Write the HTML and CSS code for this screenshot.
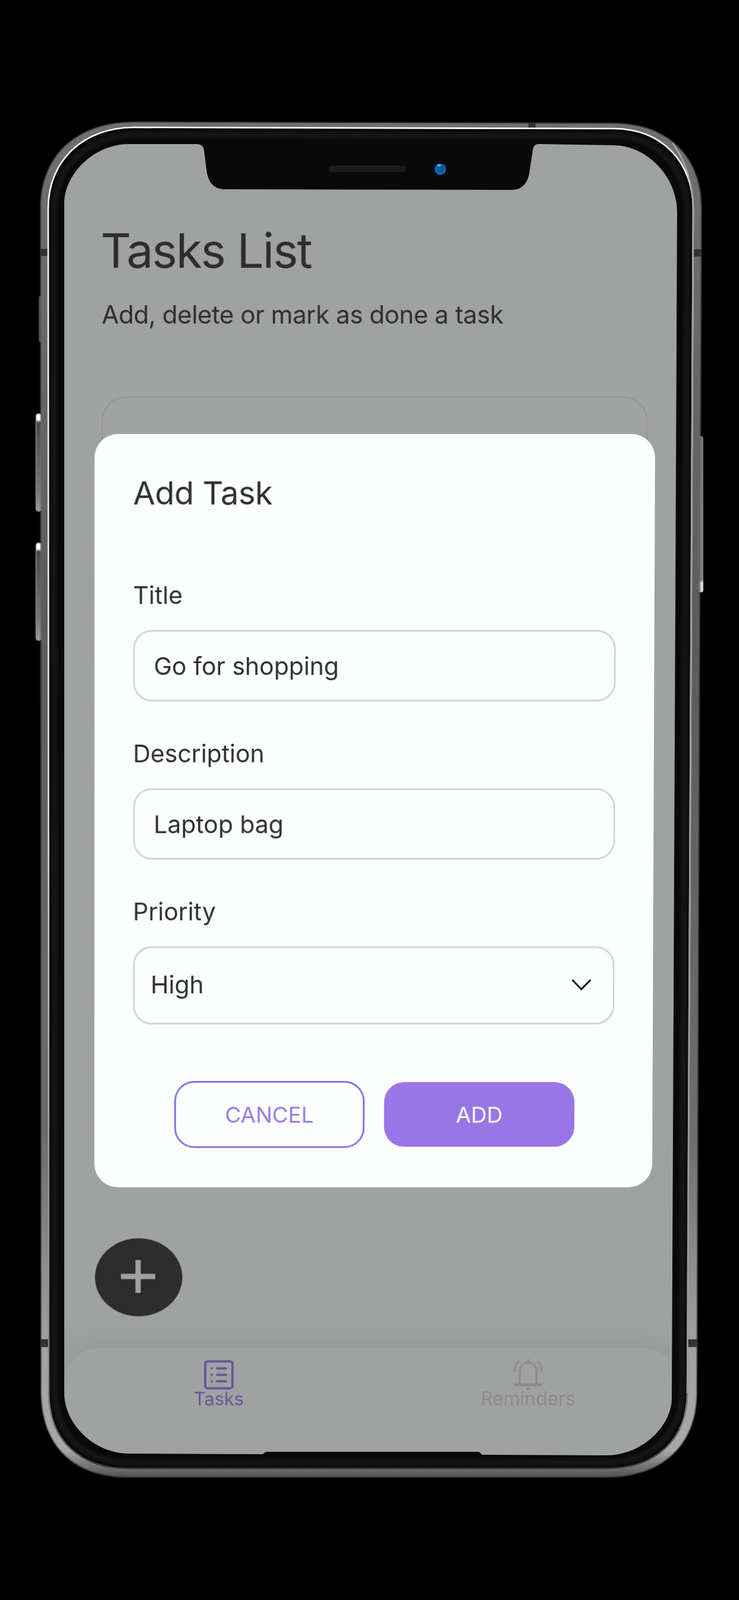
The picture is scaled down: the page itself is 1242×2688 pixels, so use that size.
FILE: index.html
```html
<!DOCTYPE html>
<html lang="en">
<head>
<meta charset="utf-8">
<title>Tasks List</title>
<link rel="stylesheet" href="styles.css">
</head>
<body>
<div class="stage">
  <svg class="device" viewBox="0 0 1242 2688" width="1242" height="2688" aria-hidden="true">
    <defs>
      <linearGradient id="frameFill" x1="0" y1="205" x2="0" y2="2482" gradientUnits="userSpaceOnUse">
        <stop offset="0" stop-color="#707070"/>
        <stop offset="0.4" stop-color="#5c5c5c"/>
        <stop offset="0.75" stop-color="#6e6e6e"/>
        <stop offset="0.9" stop-color="#a0a0a0"/>
        <stop offset="0.98" stop-color="#a8a8a8"/>
        <stop offset="1" stop-color="#505050"/>
      </linearGradient>
      <linearGradient id="lineStroke" x1="0" y1="205" x2="0" y2="2482" gradientUnits="userSpaceOnUse">
        <stop offset="0" stop-color="#ffffff"/>
        <stop offset="0.5" stop-color="#e8e8e8"/>
        <stop offset="0.75" stop-color="#9c9c9c"/>
        <stop offset="0.95" stop-color="#777777"/>
        <stop offset="1" stop-color="#333333"/>
      </linearGradient>
      <linearGradient id="keyFill" x1="0" y1="0" x2="0" y2="1">
        <stop offset="0" stop-color="#ffffff"/>
        <stop offset="0.06" stop-color="#ffffff"/>
        <stop offset="0.09" stop-color="#4a4a4a"/>
        <stop offset="0.8" stop-color="#7a7a7a"/>
        <stop offset="1" stop-color="#9a9a9a"/>
      </linearGradient>
      <linearGradient id="keyRight" x1="0" y1="0" x2="0" y2="1">
        <stop offset="0" stop-color="#777777"/>
        <stop offset="0.92" stop-color="#808080"/>
        <stop offset="0.94" stop-color="#dddddd"/>
        <stop offset="1" stop-color="#cccccc"/>
      </linearGradient>
      <radialGradient id="lens" cx="0.5" cy="0.4" r="0.6">
        <stop offset="0" stop-color="#0f4f8c"/>
        <stop offset="0.6" stop-color="#0d5aa8"/>
        <stop offset="1" stop-color="#1678d8"/>
      </radialGradient>
    </defs>
    <rect x="65" y="497" width="6" height="78" rx="3" fill="#4a4a4a"/>
    <rect class="key-edge" x="60.5" y="695" width="9" height="164" rx="4" fill="url(#keyFill)"/>
    <rect class="key-edge" x="60.5" y="912" width="9" height="164" rx="4" fill="url(#keyFill)"/>
    <rect x="1174" y="733" width="8" height="262" rx="3" fill="url(#keyRight)"/>
    <path class="frame" d="M68,350 C68,260 130,205 225,205 L1030,207 C1125,207 1179,265 1179,350 L1171,2340 C1171,2430 1110,2482 1020,2482 L215,2482 C125,2482 70,2430 69,2340 Z"/>
    <rect x="68" y="418" width="14" height="12" fill="#333333"/>
    <rect x="1164" y="419" width="15" height="12" fill="#333333"/>
    <rect x="68" y="2250" width="14" height="13" fill="#333333"/>
    <rect x="1156" y="2250" width="16" height="13" fill="#333333"/>
    <rect x="888" y="206" width="12" height="9" fill="#333333"/>
    <path class="bezel" d="M81,350 C81,270 140,214 225,214 L1030,216 C1115,216 1165,275 1165,350 L1155,2340 C1155,2420 1100,2467 1020,2467 L215,2467 C135,2467 82,2420 82,2340 Z"/>
    <path class="right-line" d="M1130,240 C1152,270 1165,310 1165,350 L1155,2340"/>
    <path class="strip" d="M91,355 C91,282 148,226 228,226 L1028,228 C1106,228 1155,285 1155,355 L1146,2335 C1146,2410 1095,2457 1018,2457 L218,2457 C142,2457 92,2410 92,2335 Z"/>
    <rect class="speaker" x="552" y="278" width="130" height="11" rx="5.5"/>
    <circle cx="740" cy="284" r="14" fill="#0d0d12"/>
    <circle cx="740" cy="284" r="9.5" fill="url(#lens)"/>
    <ellipse cx="738" cy="278" rx="3" ry="1.8" fill="#58c0ff"/>
  </svg>

  <div class="screen">
    <div class="app">
      <header class="app-head">
        <h1 class="app-title">Tasks List</h1>
        <p class="app-sub">Add, delete or mark as done a task</p>
      </header>
      <div class="task-card"></div>
      <nav class="tabbar">
        <div class="tab tab-active">
          <svg class="tab-icon" viewBox="0 0 52 56" width="52" height="56" aria-hidden="true">
            <rect x="3" y="5" width="46" height="46" rx="4" fill="none" stroke="currentColor" stroke-width="4"/>
            <circle cx="14" cy="17" r="2" fill="currentColor"/>
            <circle cx="14" cy="28" r="2" fill="currentColor"/>
            <circle cx="14" cy="39" r="2" fill="currentColor"/>
            <path d="M23 17H38M23 28H38M23 39H38" fill="none" stroke="currentColor" stroke-width="4" stroke-linecap="round"/>
          </svg>
          <span>Tasks</span>
        </div>
        <div class="tab">
          <svg class="tab-icon" viewBox="0 0 52 56" width="52" height="56" aria-hidden="true">
            <path d="M26 1V7M12 45V22C12 13 18 7 26 7S40 13 40 22V45" fill="none" stroke="currentColor" stroke-width="3.5"/>
            <path d="M5 45H47" fill="none" stroke="currentColor" stroke-width="4.5" stroke-linecap="round"/>
            <path d="M21 50H31L26 55Z" fill="currentColor"/>
            <path d="M9 5C4 10 3 16 3 21M43 5C48 10 49 16 49 21" fill="none" stroke="currentColor" stroke-width="3" stroke-linecap="round"/>
          </svg>
          <span>Reminders</span>
        </div>
      </nav>
      <button class="fab" type="button" aria-label="Add task">
        <svg viewBox="0 0 60 58" width="60" height="58" aria-hidden="true"><path d="M30 1V57M1 29H59" fill="none" stroke="currentColor" stroke-width="9"/></svg>
      </button>
      <div class="scrim"></div>
      <section class="modal">
        <h2 class="modal-title">Add Task</h2>
        <div class="field field-first">
          <div class="label">Title</div>
          <div class="input">Go for shopping</div>
        </div>
        <div class="field">
          <div class="label">Description</div>
          <div class="input">Laptop bag</div>
        </div>
        <div class="field">
          <div class="label">Priority</div>
          <div class="select">
            <span>High</span>
            <svg viewBox="0 0 34 20" width="34" height="20" aria-hidden="true"><path d="M1.5 2L17 18L32.5 2" fill="none" stroke="#1c1c1c" stroke-width="3.2"/></svg>
          </div>
        </div>
        <div class="actions">
          <button class="btn btn-outline" type="button">CANCEL</button>
          <button class="btn btn-solid" type="button">ADD</button>
        </div>
      </section>
    </div>
  </div>
</div>
</body>
</html>
```
FILE: styles.css
```css
* { box-sizing: border-box; }
html, body { margin: 0; padding: 0; background: #000; }
.stage {
  position: relative;
  width: 1242px;
  height: 2688px;
  overflow: hidden;
  background: #000;
  font-family: Inter, "Liberation Sans", sans-serif;
}
.device { position: absolute; left: 0; top: 0; display: block; }
.frame { fill: url(#frameFill); filter: blur(0.8px); }
.bezel { fill: #090909; stroke: url(#lineStroke); stroke-width: 2.6; }
.right-line { fill: none; stroke: #a4a4a4; stroke-width: 2.6; }
.strip { fill: none; stroke: #161616; stroke-width: 10; filter: blur(2.5px); }
.speaker { fill: #1c1c1c; }
.key-edge { stroke: #8a8a8a; stroke-width: 1.5; }

.screen {
  position: absolute;
  left: 108px;
  top: 242px;
  width: 1040px;
  height: 2210px;
  clip-path: path("M0,101 C0,50 50,0 109,0 L222,0 Q234,0 235,11 L239,43 C241,62 250,76 269,76 L753,77 C770,77 780,64 782,46 L787,13 Q788,0 797,0 L922,2 C980,2 1030,55 1030,115 L1021,2108 C1021,2150 975,2203 910,2203 L702,2202 Q699,2197 694,2197 L342,2197 Q337,2197 334,2201 L109,2200 C50,2200 0,2150 0,2098 Z");
}
.app {
  position: relative;
  display: flex;
  flex-direction: column;
  width: 1040px;
  height: 2225px;
  background: #fbfffd;
  transform-origin: 0 0;
  transform: matrix3d(1,0,0,0, 0,1,0,0.000004, 0,0,1,0, 0,0,0,1);
}
.app-head { padding: 131px 63px 0; color: #474747; }
.app-title { margin: 0 0 0 -2px; font-size: 80px; line-height: 96px; font-weight: 400; letter-spacing: -2px; }
.app-sub { margin: 33px 0 0; font-size: 42px; line-height: 54px; font-weight: 400; letter-spacing: -0.45px; }
.task-card {
  margin: 111px 58px 0 63px;
  height: 900px;
  border: 2px solid #ebebeb;
  border-radius: 40px;
}
.tabbar {
  margin-top: auto;
  display: flex;
  gap: 16px;
  height: 186px;
  padding: 18px 0 0 8px;
  background: #fbfffd;
  border-radius: 60px 60px 0 0;
  box-shadow: 0 -6px 60px rgba(0, 0, 0, 0.09);
}
.tab {
  flex: 1;
  display: flex;
  flex-direction: column;
  align-items: center;
  color: #dadada;
  font-size: 32px;
  line-height: 36px;
}
.tab-active { color: #a686f6; font-size: 31px; }
.tab-icon { display: block; margin-bottom: -5px; }
.fab {
  position: absolute;
  left: 52px;
  top: 1852px;
  width: 148px;
  height: 133px;
  display: flex;
  align-items: center;
  justify-content: center;
  padding: 0 3px 3px 0;
  border: 0;
  border-radius: 50%;
  background: #484848;
  color: #fbfffd;
}
.fab svg { display: block; }
.scrim { position: absolute; inset: 0; background: rgba(0, 0, 0, 0.365); }
.modal {
  position: absolute;
  left: 51px;
  top: 488px;
  width: 944px;
  height: 1277px;
  padding: 67px 65px 0;
  background: #fbfffd;
  border-radius: 40px;
  color: #2e2e2e;
}
.modal-title { margin: -1px 0 1px; font-size: 54px; line-height: 68px; font-weight: 400; letter-spacing: -0.4px; }
.field { margin-top: 66px; }
.field-first { margin-top: 116px; }
.label { margin-top: -2px; font-size: 41px; line-height: 48px; }
.input, .select {
  display: flex;
  align-items: center;
  margin-top: 35px;
  border: 3px solid #d2d4d3;
  border-radius: 32px;
  font-size: 41px;
}
.input { height: 121px; padding: 0 32px; }
.select { height: 133px; padding: 0 36px 4px 27px; justify-content: space-between; }
.actions {
  display: flex;
  align-items: center;
  justify-content: center;
  gap: 33px;
  margin-top: 96px;
  padding-left: 3px;
}
.btn {
  width: 322px;
  font-family: inherit;
  font-size: 37px;
  font-weight: 400;
  padding: 0;
  border-radius: 34px;
}
.btn-outline { height: 114px; background: transparent; border: 3px solid #8e6ce6; color: #9878e6; }
.btn-solid { height: 110px; background: #9876e6; border: 0; color: #fbfffd; }
```
